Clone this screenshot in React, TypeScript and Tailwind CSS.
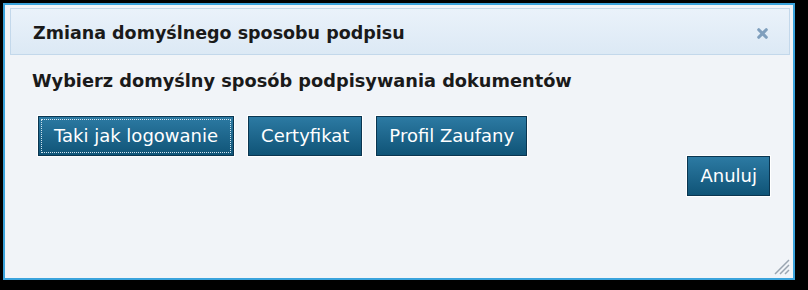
import { X } from "lucide-react";

function DialogButton({ label, focused }: { label: string; focused?: boolean }) {
	return (
		<button
			type="button"
			className="h-[40px] px-[3px] border border-[#0a3550] bg-gradient-to-b from-[#2c7aa3] to-[#0f5477] text-white text-[18px] leading-none shadow-[0_0_0_1px_#ffffff]"
		>
			<span
				className={
					"flex h-[32px] items-center " +
					(focused ? "px-[12px] outline outline-1 outline-dotted outline-[#cfe3ef]" : "px-[9px]")
				}
			>
				{label}
			</span>
		</button>
	);
}

export default function App() {
	return (
		<div
			className="w-[808px] h-[290px] bg-black pt-[3px] pl-[3px]"
			style={{ fontFamily: "'DejaVu Sans', Verdana, sans-serif" }}
		>
			<div className="relative flex flex-col w-[792px] h-[277px] border-2 border-[#3aa3dc] bg-[#f1f4f8] p-[3px] pl-[5px]">
				{/* header */}
				<div className="flex items-center justify-between h-[47px] border border-[#c3d8eb] bg-gradient-to-b from-[#eaf2fa] to-[#dce9f5] pl-[22px] pr-[19px]">
					<span className="text-[17.5px] font-bold text-[#1a1a1a] pt-[3px]">Zmiana domyślnego sposobu podpisu</span>
					<X className="w-[15px] h-[15px] text-[#7f9fbd] mt-[3px]" strokeWidth={5} />
				</div>

				{/* body */}
				<div className="flex flex-col pl-[22px] pr-[20px]">
					<p className="mt-[15px] text-[17.75px] font-bold text-[#1a1a1a] leading-[22px]">
						Wybierz domyślny sposób podpisywania dokumentów
					</p>
					<div className="flex gap-[14px] mt-[24px] pl-[6px]">
						<DialogButton label="Taki jak logowanie" focused />
						<DialogButton label="Certyfikat" />
						<DialogButton label="Profil Zaufany" />
					</div>
					<div className="flex justify-end">
						<DialogButton label="Anuluj" />
					</div>
				</div>

				{/* resize grip */}
				<svg className="absolute right-[3px] bottom-[3px]" width="18" height="18" viewBox="0 0 18 18">
					<path d="M17 3 L3 17 M17 8 L8 17 M17 13 L13 17" stroke="#9aa5b1" strokeWidth="1.5" />
				</svg>
			</div>
		</div>
	);
}
